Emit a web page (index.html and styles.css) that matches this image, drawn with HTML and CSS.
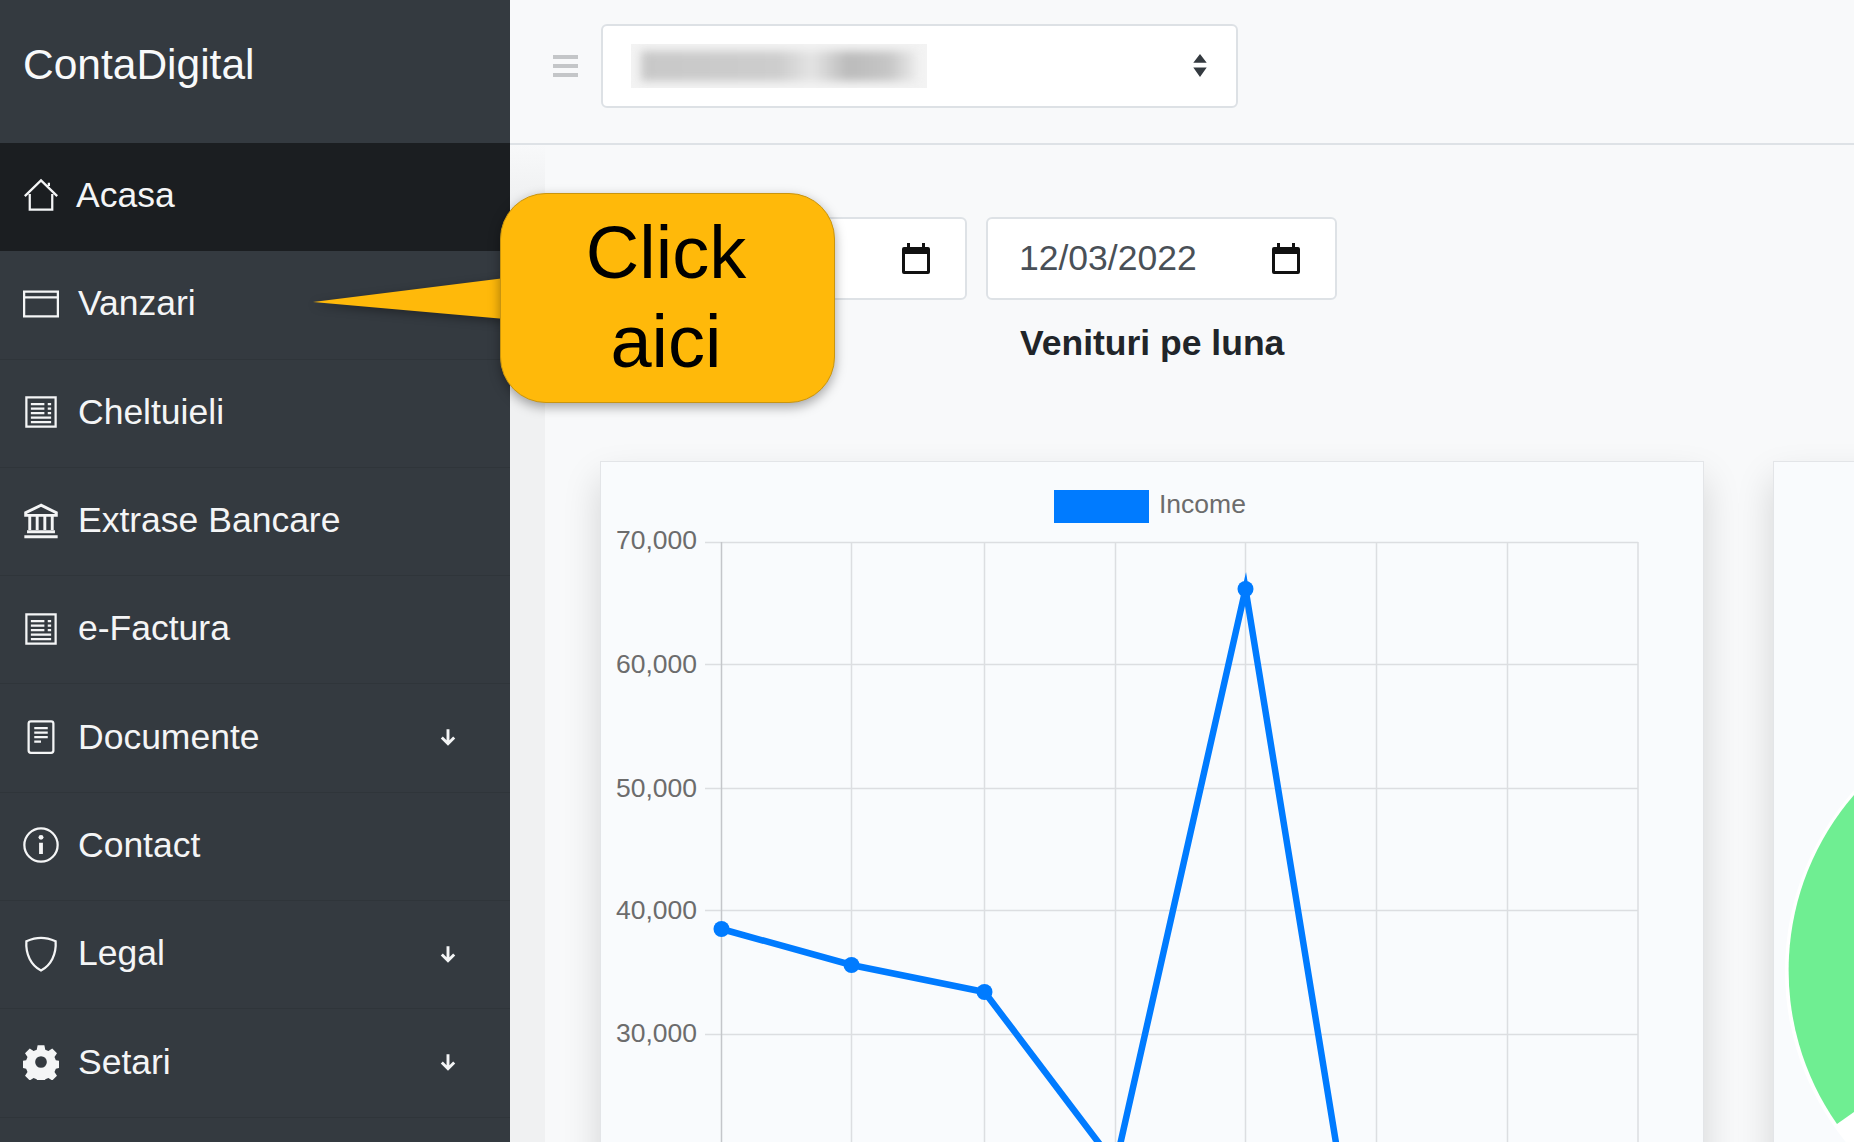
FILE: index.html
```html
<!DOCTYPE html>
<html lang="en">
<head>
  <meta charset="UTF-8">
  <meta name="viewport" content="width=device-width, initial-scale=1.0">
  <title>ContaDigital</title>
  <link rel="stylesheet" href="styles.css">
</head>
<body>
  <div class="wrapper">
    <nav class="sidebar">
      <div class="brand">ContaDigital</div>
      <a class="nav-item active">
        <svg class="nav-icon" viewBox="0 0 16 16" fill="none" stroke="currentColor" stroke-width="1"><path d="M3 7.500V14.500H13V7.500M.8 8.500 8 1.500l7.200 7M11.500 2.500V4"/></svg>
        <span>Acasa</span>
      </a>
      <a class="nav-item">
        <svg class="nav-icon" viewBox="0 0 16 16" fill="none" stroke="currentColor" stroke-width="1"><path d="M.5 2.500h15v11H.5zM.5 5h15"/></svg>
        <span>Vanzari</span>
      </a>
      <a class="nav-item">
        <svg class="nav-icon" viewBox="0 0 16 16" fill="none" stroke="currentColor" stroke-width="1"><path d="M1.500 1.500h13v13h-13zM3.500 4.500h6M3.500 6.500h6M3.500 8.500h6M3.500 10.500h9M3.500 12.500h9M11 4.500h1.500M11 6.500h1.500M11 8.500h1.500"/></svg>
        <span>Cheltuieli</span>
      </a>
      <a class="nav-item">
        <svg class="nav-icon" viewBox="0 0 16 16" fill="none" stroke="currentColor" stroke-width="1"><path d="M8 1 1.200 4.300V5.500H14.800V4.300zM3 6v6M6.300 6v6M9.700 6v6M13 6v6" stroke-width="1.300"/><path d="M1.800 12.800H14.200M.6 15H15.400" stroke-width="1.300"/></svg>
        <span>Extrase Bancare</span>
      </a>
      <a class="nav-item">
        <svg class="nav-icon" viewBox="0 0 16 16" fill="none" stroke="currentColor" stroke-width="1"><path d="M1.500 1.500h13v13h-13zM3.500 4.500h6M3.500 6.500h6M3.500 8.500h6M3.500 10.500h9M3.500 12.500h9M11 4.500h1.500M11 6.500h1.500M11 8.500h1.500"/></svg>
        <span>e-Factura</span>
      </a>
      <a class="nav-item">
        <svg class="nav-icon" viewBox="0 0 16 16" fill="none" stroke="currentColor" stroke-width="1"><rect x="2.500" y="1" width="11" height="14" rx="1"/><path d="M5 4h6M5 6h6M5 8h6M5 10h3"/></svg>
        <span>Documente</span>
        <svg class="nav-arrow" viewBox="0 0 16 16" fill="none" stroke="currentColor" stroke-width="2.600"><path d="M8 1v13M2.500 8.500 8 14l5.500-5.500"/></svg>
      </a>
      <a class="nav-item">
        <svg class="nav-icon" viewBox="0 0 16 16" fill="none" stroke="currentColor" stroke-width="1"><circle cx="8" cy="8" r="7.400"/><path d="M8 7v5" stroke-width="1.700"/><circle cx="8" cy="4.600" r="1.100" fill="currentColor" stroke="none"/></svg>
        <span>Contact</span>
      </a>
      <a class="nav-item">
        <svg class="nav-icon" viewBox="0 0 16 16" fill="none" stroke="currentColor" stroke-width="1"><path d="M8 .8c2.200 0 4.600.7 6.500 1.500C14.900 8 12.500 13 8 15.300 3.500 13 1.100 8 1.500 2.300 3.400 1.500 5.800.8 8 .8z"/></svg>
        <span>Legal</span>
        <svg class="nav-arrow" viewBox="0 0 16 16" fill="none" stroke="currentColor" stroke-width="2.600"><path d="M8 1v13M2.500 8.500 8 14l5.500-5.500"/></svg>
      </a>
      <a class="nav-item">
        <svg class="nav-icon" viewBox="0 0 16 16" fill="currentColor"><path fill-rule="evenodd" d="M6.500.5h3l.4 2 1.400.6 1.700-1.100 2.100 2.100-1.100 1.700.6 1.400 2 .4v3l-2 .4-.6 1.400 1.100 1.700-2.100 2.100-1.700-1.100-1.400.6-.4 2h-3l-.4-2-1.400-.6-1.700 1.100-2.100-2.100 1.100-1.700-.6-1.400-2-.4v-3l2-.4.6-1.400L.9 4.100 3 2l1.700 1.100 1.400-.6zM8 5.400a2.600 2.600 0 1 0 0 5.200 2.600 2.600 0 0 0 0-5.200z"/></svg>
        <span>Setari</span>
        <svg class="nav-arrow" viewBox="0 0 16 16" fill="none" stroke="currentColor" stroke-width="2.600"><path d="M8 1v13M2.500 8.500 8 14l5.500-5.500"/></svg>
      </a>
    </nav>

    <div class="main">
      <header class="topbar">
        <div class="menu-toggle"><span></span><span></span><span></span></div>
        <div class="company-select">
          <div class="blurred"><div class="blurred-text"></div></div>
          <svg class="sort-icon" viewBox="0 0 16 24" fill="#343a40"><path d="M8 0 15 9H1zM8 24 1 14h14z"/></svg>
        </div>
      </header>
      <div class="content">
        <div class="filters">
          <div class="date-field date-first">
            <svg class="cal-icon" viewBox="0 0 28 31" fill="#111"><path d="M5 0h3v4h12V0h3v4h3a2 2 0 0 1 2 2v23a2 2 0 0 1-2 2H2a2 2 0 0 1-2-2V6a2 2 0 0 1 2-2h3zM3 11v17h22V11z"/></svg>
          </div>
          <div class="date-field">
            <span>12/03/2022</span>
            <svg class="cal-icon" viewBox="0 0 28 31" fill="#111"><path d="M5 0h3v4h12V0h3v4h3a2 2 0 0 1 2 2v23a2 2 0 0 1-2 2H2a2 2 0 0 1-2-2V6a2 2 0 0 1 2-2h3zM3 11v17h22V11z"/></svg>
          </div>
        </div>
        <h2 class="chart-title">Venituri pe luna</h2>
        <div class="cards">
          <div class="card card-line">
            <svg class="line-chart" width="1102" height="680" viewBox="601 462 1102 680">
              <g class="grid">
                <path d="M705 542.500H1638M705 664.500H1638M705 788.500H1638M705 910.500H1638M705 1034.500H1638"/>
                <path d="M851.500 542V1142M984.500 542V1142M1115.500 542V1142M1245.500 542V1142M1376.500 542V1142M1507.500 542V1142M1638 542V1142"/>
                <path class="axis" d="M721.500 542V1142"/>
              </g>
              <rect class="legend-box" x="1054" y="490" width="95" height="33"/>
              <text class="legend-text" x="1159" y="513">Income</text>
              <text class="tick" x="697" y="549">70,000</text>
              <text class="tick" x="697" y="673">60,000</text>
              <text class="tick" x="697" y="797">50,000</text>
              <text class="tick" x="697" y="919">40,000</text>
              <text class="tick" x="697" y="1042">30,000</text>
              <polyline class="series" points="721.500,929 851.500,965 984.500,992 1115.500,1165 1245.500,589 1376.500,1391"/>
              <g class="dots">
                <circle cx="721.500" cy="929" r="8"/>
                <circle cx="851.500" cy="965" r="8"/>
                <circle cx="984.500" cy="992" r="8"/>
                <circle cx="1245.500" cy="589" r="8"/>
              </g>
            </svg>
          </div>
          <div class="card card-pie">
            <svg class="pie-chart" width="80" height="680" viewBox="1774 462 80 680">
              <circle class="pie-base" cx="2056" cy="971" r="271"/>
              <path class="slice" d="M2056 971 1837 1124A268 268 0 0 1 1854 795z"/>
            </svg>
          </div>
        </div>
      </div>
    </div>
  </div>

  <div class="callout">
    <svg class="callout-tail" width="200" height="42" viewBox="0 0 200 42"><path d="M0 24 192 0V41z"/></svg>
    <div class="callout-body">Click<br>aici</div>
  </div>
</body>
</html>
```

FILE: styles.css
```css
* {
  box-sizing: border-box;
}
html, body {
  height: 100%;
  margin: 0;
  overflow: hidden;
}
body {
  font-family: "Liberation Sans", Arial, sans-serif;
  font-size: 35.500px;
  color: #212529;
  background-color: #f8f9fa;
}
.wrapper {
  display: flex;
  height: 100%;
  overflow: hidden;
}

/* sidebar */
.sidebar {
  flex: 0 0 510px;
  background-color: #343a40;
  color: #fff;
}
.brand {
  height: 143px;
  padding: 42px 23px 0;
  font-size: 42.500px;
  line-height: 46px;
  color: #f8f9fa;
}
.nav-item {
  display: flex;
  align-items: center;
  height: 108.300px;
  padding: 0 53px 2px 23px;
  border-bottom: 1px solid #2f353a;
  color: #f4f5f6;
}
.nav-item.active {
  padding-bottom: 4px;
  background-color: #1b1e21;
  border-bottom: none;
}
.nav-icon {
  flex: 0 0 36px;
  width: 36px;
  height: 36px;
  margin-right: 19px;
}
.active .nav-icon {
  margin-right: 17px;
}
.nav-item span {
  flex: 1;
}
.nav-arrow {
  width: 18px;
  height: 18px;
}

/* top bar */
.main {
  flex: 1;
  min-width: 0;
  overflow: hidden;
}
.topbar {
  display: flex;
  align-items: center;
  height: 145px;
  padding: 0 0 12px 43px;
  border-bottom: 2px solid #dee2e6;
}
.menu-toggle {
  display: flex;
  flex-direction: column;
  gap: 5px;
  width: 25px;
  margin-right: 23px;
}
.menu-toggle span {
  height: 4px;
  background-color: #c4c6c8;
}
.company-select {
  display: flex;
  align-items: center;
  justify-content: space-between;
  width: 637px;
  height: 84px;
  padding: 0 28px;
  background-color: #fff;
  border: 2px solid #dde1e5;
  border-radius: 6px;
}
.blurred {
  width: 296px;
  height: 44px;
  padding: 7px 10px;
  overflow: hidden;
  background-color: #f3f3f3;
}
.blurred-text {
  height: 30px;
  background: linear-gradient(90deg, #c8c8c8, #cdcdcd 50%, #e4e4e4 62%, #bbb 75%, #c6c6c6 90%, #ececec);
  filter: blur(4px);
}
.sort-icon {
  width: 16px;
  height: 23px;
}

/* content */
.content {
  position: relative;
  height: calc(100% - 145px);
  overflow: hidden;
  padding: 72px 0 0 90px;
}
.content::before {
  content: "";
  position: absolute;
  left: 0;
  top: 0;
  bottom: 0;
  width: 35px;
  background: linear-gradient(#f8f9fa, #f0f1f2 50px);
}
.filters {
  position: relative;
  display: flex;
  gap: 19px;
  margin-left: 16px;
}
.date-field {
  display: flex;
  align-items: center;
  justify-content: space-between;
  flex: 0 0 351px;
  height: 83px;
  padding: 0 35px 0 31px;
  background-color: #fff;
  border: 2px solid #dee2e6;
  border-radius: 6px;
  color: #495057;
}
.date-first {
  justify-content: flex-end;
}
.cal-icon {
  width: 28px;
  height: 31px;
}
.chart-title {
  margin: 21px 0 0;
  padding-left: 420px;
  font-size: 35.500px;
  line-height: 44px;
  font-weight: 700;
}

/* charts */
.cards {
  position: relative;
  display: flex;
  gap: 69px;
  margin-top: 96px;
}
.card {
  height: 800px;
  background-color: #f9fbfd;
  border: 1px solid #e3e5e8;
  box-shadow: 0 18px 35px rgba(0, 0, 0, 0.15);
}
.card-line {
  flex: 0 0 1104px;
}
.card-pie {
  flex: 0 0 200px;
}
.line-chart, .pie-chart {
  display: block;
}
.grid path {
  fill: none;
  stroke: #dcdee1;
  stroke-width: 1.500;
}
.grid .axis {
  stroke: #c4c6ca;
}
.legend-box {
  fill: #007bff;
}
.legend-text, .tick {
  font-size: 26.500px;
  fill: #6c6c6c;
}
.tick {
  text-anchor: end;
}
.series {
  fill: none;
  stroke: #007bff;
  stroke-width: 6.500;
  stroke-miterlimit: 10;
}
.dots circle {
  fill: #007bff;
}
.pie-base {
  fill: #fff;
}
.slice {
  fill: #6fee92;
}

/* annotation bubble over the page */
.callout {
  position: absolute;
  left: 500px;
  top: 193px;
}
.callout-tail {
  position: absolute;
  left: -187px;
  top: 85px;
  fill: #ffb90a;
  filter: drop-shadow(0 3px 5px rgba(0, 0, 0, 0.35));
}
.callout-body {
  position: relative;
  width: 335px;
  height: 210px;
  padding: 14px 3px 0 0;
  background-color: #ffb90a;
  border: 1px solid #c9950f;
  border-radius: 46px;
  box-shadow: 0 4px 12px rgba(0, 0, 0, 0.35);
  color: #000;
  font-size: 74px;
  line-height: 89px;
  text-align: center;
}
```
